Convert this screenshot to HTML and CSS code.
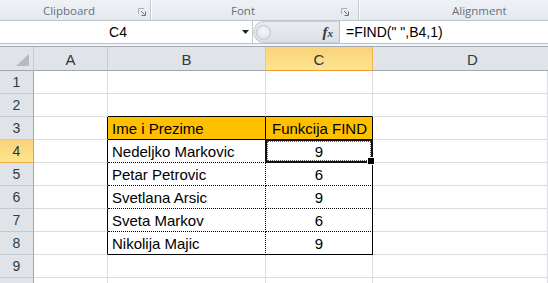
FILE: index.html
```html
<!DOCTYPE html>
<html lang="sr">
<head>
  <meta charset="UTF-8" />
  <title>FIND - Excel</title>
  <link rel="stylesheet" href="styles.css">
</head>
<body>
  <div class="ribbon">
    <div class="group clipboard">
      <span class="label">Clipboard</span>
      <svg class="launcher" width="8" height="8" viewBox="0 0 8 8"><path d="M0.5 6V0.5H6" fill="none" stroke="#a9b0ba"/><path d="M3 3l3.5 3.5M7.5 3.5v4h-4" fill="none" stroke="#687280"/></svg>
    </div>
    <div class="group font">
      <span class="label">Font</span>
      <svg class="launcher" width="8" height="8" viewBox="0 0 8 8"><path d="M0.5 6V0.5H6" fill="none" stroke="#a9b0ba"/><path d="M3 3l3.5 3.5M7.5 3.5v4h-4" fill="none" stroke="#687280"/></svg>
    </div>
    <div class="group align">
      <span class="label">Alignment</span>
    </div>
  </div>

  <div class="formula-bar">
    <div class="name-box">
      <span class="ref">C4</span>
      <svg class="drop" width="7" height="4" viewBox="0 0 7 4"><path d="M0 0h7L3.5 4z" fill="#222"/></svg>
    </div>
    <div class="fx-zone">
      <span class="knob"></span>
      <span class="fx">f<small>x</small></span>
    </div>
    <div class="formula">=FIND(" ",B4,1)</div>
  </div>
  <div class="strip"></div>

  <div class="sheet">
    <div class="corner"><span class="tri"></span></div>
    <div class="col-head">A</div>
    <div class="col-head">B</div>
    <div class="col-head active">C</div>
    <div class="col-head last-col">D</div>

    <div class="row-head">1</div><div class="cell"></div><div class="cell"></div><div class="cell"></div><div class="cell"></div>
    <div class="row-head">2</div><div class="cell"></div><div class="cell above"></div><div class="cell above"></div><div class="cell"></div>

    <div class="row-head">3</div><div class="cell left-of"></div>
    <div class="cell t-head">Ime i Prezime</div>
    <div class="cell t-head">Funkcija FIND</div>
    <div class="cell"></div>

    <div class="row-head active">4</div><div class="cell left-of"></div>
    <div class="cell t-name">Nedeljko Markovic</div>
    <div class="cell t-num selected">9</div>
    <div class="cell"></div>

    <div class="row-head">5</div><div class="cell left-of"></div>
    <div class="cell t-name">Petar Petrovic</div>
    <div class="cell t-num">6</div>
    <div class="cell"></div>

    <div class="row-head">6</div><div class="cell left-of"></div>
    <div class="cell t-name">Svetlana Arsic</div>
    <div class="cell t-num">9</div>
    <div class="cell"></div>

    <div class="row-head">7</div><div class="cell left-of"></div>
    <div class="cell t-name">Sveta Markov</div>
    <div class="cell t-num">6</div>
    <div class="cell"></div>

    <div class="row-head">8</div><div class="cell left-of"></div>
    <div class="cell t-name last">Nikolija Majic</div>
    <div class="cell t-num last">9</div>
    <div class="cell"></div>

    <div class="row-head">9</div><div class="cell"></div><div class="cell"></div><div class="cell"></div><div class="cell"></div>
    <div class="row-head"></div><div class="cell"></div><div class="cell"></div><div class="cell"></div><div class="cell"></div>
  </div>
</body>
</html>
```

FILE: styles.css
```css
:root {
  --grid: #dadcdf;
  --head-bg: #e0e4e9;
  --head-line: #c4cad2;
  --head-edge: #9ea6b1;
  --head-text: #2e3a48;
  --gold: #ffc000;
}
* { margin: 0; padding: 0; box-sizing: border-box; }
body {
  font-family: "Liberation Sans", Arial, sans-serif;
  background: #fff;
  width: 548px;
  height: 283px;
  overflow: hidden;
}

/* ribbon group captions */
.ribbon {
  display: flex;
  height: 21px;
  background: linear-gradient(#eef1f5, #e5e9ee);
  border-bottom: 1px solid #bfc5cd;
}
.ribbon .group {
  display: flex;
  align-items: center;
  height: 20px;
  border-right: 1px solid #c3c9d1;
  box-shadow: 1px 0 0 #fbfcfd;
}
.ribbon .label {
  font-family: "Open Sans", "Liberation Sans", sans-serif;
  font-size: 11.5px;
  color: #66717f;
  text-align: center;
}
.ribbon .launcher { margin-top: 3px; }
.ribbon .clipboard { width: 151px; }
.ribbon .clipboard .label { width: 138px; }
.ribbon .font { width: 208px; }
.ribbon .font .label { width: 196px; margin-left: -6px; }
.ribbon .align { flex: 1; min-width: 0; border-right: none; box-shadow: none; }
.ribbon .align .label { padding-left: 93px; text-align: left; }

/* name box + formula */
.formula-bar {
  display: flex;
  height: 22px;
  background: #fff;
}
.name-box {
  width: 253px;
  display: flex;
  align-items: center;
  border-right: 1px solid #c5cbd3;
}
.name-box .ref {
  width: 236px;
  text-align: center;
  font-size: 14px;
  color: #000;
}
.name-box .drop { margin-left: 6px; }
.fx-zone {
  width: 87px;
  display: flex;
  align-items: center;
  justify-content: space-between;
  padding: 0 6px 0 2px;
  background: linear-gradient(#e9ecf0, #dce0e6);
  border-radius: 11px 0 0 11px;
  border: 1px solid #c8ced6;
  border-right-color: #b7bec8;
}
.fx-zone .knob {
  width: 15px;
  height: 15px;
  border-radius: 50%;
  background: radial-gradient(circle at 50% 40%, #f7f8fa, #d9dde3);
  border: 1px solid #c0c6ce;
}
.fx-zone .fx {
  font-family: "Liberation Serif", serif;
  font-style: italic;
  font-weight: bold;
  font-size: 15px;
  color: #333c48;
}
.fx-zone .fx small { font-size: 11px; }
.formula {
  flex: 1;
  padding-left: 6px;
  font-size: 14px;
  line-height: 22px;
  color: #000;
}
.strip {
  height: 4px;
  background: #f3f4f6;
  border-top: 1px solid #b9c0c9;
  border-bottom: 1px solid #a3abb6;
}

/* worksheet */
.sheet {
  display: grid;
  grid-template-columns: 34px 74px 158px 107px 1fr;
  grid-template-rows: 24px;
  grid-auto-rows: 23px;
  height: 236px;
  overflow: hidden;
  font-size: 15px;
}
.corner, .col-head, .row-head {
  background: var(--head-bg);
  color: var(--head-text);
  text-align: center;
}
.corner {
  position: relative;
  border-right: 1px solid var(--head-line);
  border-bottom: 1px solid var(--head-edge);
}
.corner .tri {
  position: absolute;
  right: 4px;
  bottom: 4px;
  width: 0;
  height: 0;
  border-left: 13px solid transparent;
  border-bottom: 12px solid #b4bbc4;
}
.col-head {
  line-height: 23px;
  padding-top: 1px;
  border-right: 1px solid var(--head-line);
  border-bottom: 1px solid var(--head-edge);
}
.col-head.last-col { padding-left: 24px; border-right: none; }
.row-head {
  font-size: 14px;
  line-height: 23px;
  border-right: 1px solid var(--head-edge);
  border-bottom: 1px solid var(--head-line);
}
.col-head.active, .row-head.active {
  background: linear-gradient(#f9d27a, #fde58e);
  color: #2a3440;
}
.col-head.active { border-right-color: #f0b04a; border-bottom-color: #f29a36; }
.row-head.active { border-right-color: #f29a36; border-bottom-color: #f0b04a; }

.cell {
  line-height: 23px;
  padding-left: 4px;
  white-space: nowrap;
  color: #000;
  border-right: 1px solid var(--grid);
  border-bottom: 1px solid var(--grid);
}
.cell.above { border-bottom-color: #000; }
.cell.left-of { border-right-color: #000; }
.t-head {
  background: var(--gold);
  border-right: 1px solid #000;
  border-bottom: 1px solid #000;
}
.t-head + .t-head { padding-left: 6px; }
.t-name {
  border-right: 1px dotted #000;
  border-bottom: 1px dotted #000;
}
.t-num {
  text-align: center;
  padding-left: 0;
  border-right: 1px solid #000;
  border-bottom: 1px dotted #000;
}
.t-name.last, .t-num.last { border-bottom: 1px solid #000; }

/* active cell frame and fill handle */
.selected { position: relative; }
.selected::after {
  content: "";
  position: absolute;
  top: -1px;
  left: -1px;
  right: -1px;
  bottom: -1px;
  border: 2px solid #111;
  outline: 1px dotted #555;
  outline-offset: -3px;
}
.selected::before {
  content: "";
  position: absolute;
  right: -3px;
  bottom: -3px;
  width: 6px;
  height: 6px;
  background: #000;
  border: 1px solid #fff;
  z-index: 1;
}
```
